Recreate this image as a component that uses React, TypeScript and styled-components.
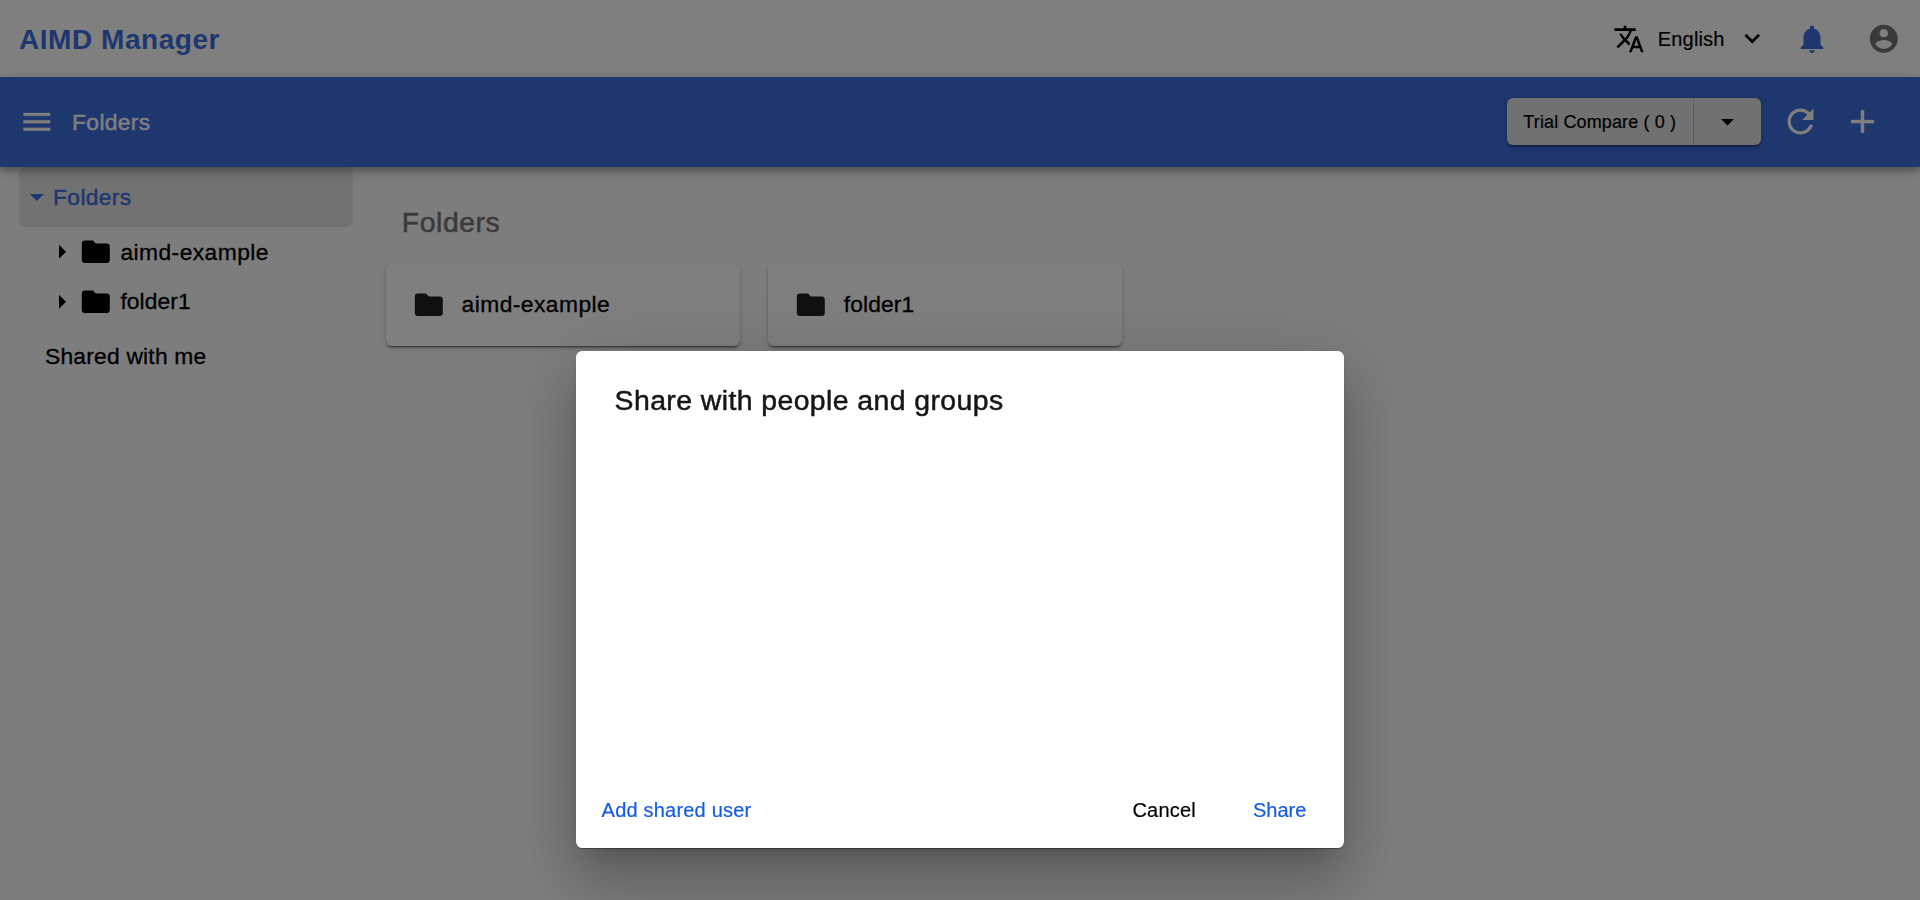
import React from "react";
import styled, { createGlobalStyle } from "styled-components";

const GlobalStyle = createGlobalStyle`
  *, *::before, *::after { box-sizing: border-box; }
  html, body, #root { height: 100%; }
  body {
    margin: 0;
    overflow: hidden;
    background: #fafafa;
    color: #000;
    font-family: "Liberation Sans", Arial, Helvetica, sans-serif;
  }
  button { font: inherit; color: inherit; background: none; border: 0; padding: 0; margin: 0; }
`;

const icons = {
  menu: "M3 18h18v-2H3v2zm0-5h18v-2H3v2zm0-7v2h18V6H3z",
  translate:
    "M12.87 15.07l-2.54-2.51.03-.03c1.74-1.94 2.98-4.17 3.71-6.53H17V4h-7V2H8v2H1v1.99h11.17C11.5 7.92 10.44 9.75 9 11.35 8.07 10.32 7.3 9.19 6.69 8h-2c.73 1.63 1.73 3.17 2.98 4.56l-5.09 5.02L4 19l5-5 3.11 3.11.76-2.04zM18.5 10h-2L12 22h2l1.12-3h4.75L21 22h2l-4.5-12zm-2.62 7l1.62-4.33L19.12 17h-3.24z",
  expand: "M16.59 8.59L12 13.17 7.41 8.59 6 10l6 6 6-6z",
  bell: "M12 22c1.1 0 2-.9 2-2h-4c0 1.1.89 2 2 2zm6-6v-5c0-3.07-1.64-5.64-4.5-6.32V4c0-.83-.67-1.5-1.5-1.5s-1.5.67-1.5 1.5v.68C7.63 5.36 6 7.92 6 11v5l-2 2v1h16v-1l-2-2z",
  account:
    "M12 2C6.48 2 2 6.48 2 12s4.48 10 10 10 10-4.48 10-10S17.52 2 12 2zm0 3c1.66 0 3 1.34 3 3s-1.34 3-3 3-3-1.34-3-3 1.34-3 3-3zm0 14.2c-2.5 0-4.71-1.28-6-3.22.03-1.99 4-3.08 6-3.08 1.99 0 5.97 1.09 6 3.08-1.29 1.94-3.5 3.22-6 3.22z",
  refresh:
    "M17.65 6.35C16.2 4.9 14.21 4 12 4c-4.42 0-7.99 3.58-7.99 8s3.57 8 7.99 8c3.73 0 6.84-2.55 7.73-6h-2.08c-.82 2.33-3.04 4-5.65 4-3.31 0-6-2.69-6-6s2.69-6 6-6c1.66 0 3.14.69 4.22 1.78L13 11h7V4l-2.35 2.35z",
  add: "M19 13h-6v6h-2v-6H5v-2h6V5h2v6h6v2z",
  arrowDown: "M7 10l5 5 5-5z",
  arrowRight: "M10 17l5-5-5-5v10z",
  folder:
    "M10 4H4c-1.1 0-1.99.9-1.99 2L2 18c0 1.1.9 2 2 2h16c1.1 0 2-.9 2-2V8c0-1.1-.9-2-2-2h-8l-2-2z",
};

const Svg = styled.svg<{ $size: number; $color?: string; $weight?: number }>`
  display: block;
  flex: none;
  width: ${(p) => p.$size}px;
  height: ${(p) => p.$size}px;
  fill: ${(p) => p.$color ?? "currentColor"};
  stroke: ${(p) => (p.$weight ? "currentColor" : "none")};
  stroke-width: ${(p) => p.$weight ?? 0};
  stroke-linejoin: round;
`;

interface IconProps {
  name: keyof typeof icons;
  size: number;
  color?: string;
  weight?: number;
}

const Icon = ({ name, size, color, weight }: IconProps) => (
  <Svg viewBox="0 0 24 24" $size={size} $color={color} $weight={weight} aria-hidden="true">
    <path d={icons[name]} />
  </Svg>
);

const Label = styled.span<{ $size: number; $track?: number; $stroke?: number }>`
  font-size: ${(p) => p.$size}px;
  line-height: 32px;
  letter-spacing: ${(p) => p.$track ?? 0}px;
  -webkit-text-stroke: ${(p) => p.$stroke ?? 0}px currentColor;
  white-space: nowrap;
`;

const Page = styled.div`
  height: 100vh;
  display: flex;
  flex-direction: column;
`;

const TopBar = styled.header`
  height: 77px;
  flex: none;
  display: flex;
  align-items: center;
  justify-content: space-between;
  padding: 0 19px;
  background: #fff;
`;

const Brand = styled.h1`
  margin: 0;
  padding-top: 2px;
  color: #3c6ee0;
  font-size: 28px;
  line-height: 32px;
  letter-spacing: 0.55px;
  font-weight: 700;
`;

const TopActions = styled.div`
  display: flex;
  align-items: center;
`;

const Language = styled.button`
  display: flex;
  align-items: center;
  margin-right: 27px;
  gap: 12.8px;
`;

const Avatar = styled.button`
  margin-left: 38.5px;
`;

const NavBar = styled.nav`
  position: relative;
  z-index: 1;
  height: 90px;
  flex: none;
  display: flex;
  align-items: center;
  padding: 0 38px 1px 18.9px;
  background: #3d6fde;
  color: #fff;
  box-shadow: 0 3px 6px -1px rgba(0, 0, 0, 0.2), 0 6px 8px rgba(0, 0, 0, 0.14),
    0 2px 16px rgba(0, 0, 0, 0.12);
`;

const NavTitle = styled.div`
  flex: 1;
  padding-left: 17.6px;
  color: #fff;
`;

const CompareGroup = styled.div`
  display: flex;
  width: 254px;
  height: 47px;
  margin-right: 20.5px;
  border-radius: 6px;
  background: #e2e2e2;
  color: #000;
  box-shadow: 0 3px 2px -2px rgba(0, 0, 0, 0.3), 0 2px 3px rgba(0, 0, 0, 0.2),
    0 1px 8px rgba(0, 0, 0, 0.14);
`;

const CompareButton = styled.button`
  width: 187px;
  padding-left: 16.8px;
  text-align: left;
  border-right: 1px solid #b9b9b9;
`;

const CompareToggle = styled.button`
  flex: 1;
  display: flex;
  align-items: center;
  justify-content: center;
`;

const NavAction = styled.button`
  margin-left: 23px;
  &:first-of-type { margin-left: 0; }
`;

const Body = styled.div`
  flex: 1;
  display: flex;
  background: #fafafa;
`;

const Sidebar = styled.aside`
  width: 386px;
  flex: none;
  padding: 0 33px 0 19px;
`;

const TreeRoot = styled.div`
  display: flex;
  align-items: center;
  height: 60px;
  padding: 0 0 0 0.5px;
  border-radius: 6px;
  background: #e4e4e4;
  color: #3c6ee0;
`;

const TreeList = styled.ul`
  list-style: none;
  margin: 0;
  padding: 0.4px 0 0 26.2px;
`;

const TreeItem = styled.li`
  display: flex;
  align-items: center;
  height: 49.4px;
`;

const TreeLabel = styled.span`
  padding: 0 0 1px 8px;
  display: flex;
`;

const SharedLink = styled.div`
  padding: 14px 0 0 26px;
  display: flex;
`;

const Main = styled.main`
  flex: 1;
  padding-top: 39px;
`;

const SectionTitle = styled.h2`
  margin: 0 0 25.4px;
  padding-left: 15.8px;
  color: #747474;
  font-weight: 400;
  display: flex;
`;

const Cards = styled.div`
  display: flex;
  gap: 28.4px;
`;

const Card = styled.article`
  width: 353.8px;
  height: 82.4px;
  display: flex;
  align-items: center;
  gap: 8px;
  padding: 0 26px;
  border-radius: 6px;
  background: #fff;
  box-shadow: 0 3px 2px -2px rgba(0, 0, 0, 0.4), 0 2px 2px rgba(0, 0, 0, 0.16),
    0 2px 5px rgba(0, 0, 0, 0.16);
`;

const Backdrop = styled.div`
  position: fixed;
  inset: 0;
  z-index: 10;
  display: flex;
  justify-content: center;
  align-items: flex-start;
  padding-top: 351.4px;
  background: rgba(0, 0, 0, 0.5);
`;

const Dialog = styled.section`
  width: 767.6px;
  height: 497px;
  display: flex;
  flex-direction: column;
  border-radius: 6.4px;
  background: #fff;
  box-shadow: 0 17.6px 24px -11.2px rgba(0, 0, 0, 0.2), 0 38.4px 60.8px 4.8px rgba(0, 0, 0, 0.14),
    0 14.4px 73.6px 12.8px rgba(0, 0, 0, 0.12), 0 1px 1px rgba(0, 0, 0, 0.35);
`;

const DialogTitle = styled.h3`
  margin: 0;
  padding: 32.6px 38.4px 0;
  color: #161616;
  font-weight: 400;
  display: flex;
`;

const DialogContent = styled.div`
  flex: 1;
`;

const DialogActions = styled.footer`
  display: flex;
  align-items: center;
  padding: 0 37.5px 22.4px 25.4px;
`;

const ActionButton = styled.button<{ $primary?: boolean }>`
  color: ${(p) => (p.$primary ? "#155be3" : "#000")};
`;

const Spacer = styled.div`
  flex: 1;
`;

const Cancel = styled(ActionButton)`
  margin-right: 57px;
`;

const folders = [
  { name: "aimd-example", track: 0.45 },
  { name: "folder1", track: 0.1 },
];

export default function App() {
  return (
    <>
      <GlobalStyle />
      <Page>
        <TopBar>
          <Brand>AIMD Manager</Brand>
          <TopActions>
            <Language>
              <Icon name="translate" size={32} />
              <Label $size={20} $track={0.15} $stroke={0.2}>English</Label>
              <Icon name="expand" size={30.6} weight={0.2} />
            </Language>
            <Icon name="bell" size={34} color="#3c6ee0" />
            <Avatar aria-label="Account">
              <Icon name="account" size={33.6} color="#757575" />
            </Avatar>
          </TopActions>
        </TopBar>
        <NavBar>
          <Icon name="menu" size={35.6} weight={0.15} />
          <NavTitle>
            <Label $size={22.8} $track={0.35} $stroke={0.4}>Folders</Label>
          </NavTitle>
          <CompareGroup>
            <CompareButton>
              <Label $size={18} $track={0.13} $stroke={0.2}>Trial Compare ( 0 )</Label>
            </CompareButton>
            <CompareToggle aria-label="More">
              <Icon name="arrowDown" size={31} />
            </CompareToggle>
          </CompareGroup>
          <NavAction aria-label="Refresh"><Icon name="refresh" size={39} /></NavAction>
          <NavAction aria-label="Add"><Icon name="add" size={39} weight={0.15} /></NavAction>
        </NavBar>
        <Body>
          <Sidebar>
            <TreeRoot>
              <Icon name="arrowDown" size={33.6} />
              <Label $size={22.8} $track={0.35} $stroke={0.4}>Folders</Label>
            </TreeRoot>
            <TreeList>
              {folders.map((f) => (
                <TreeItem key={f.name}>
                  <Icon name="arrowRight" size={33.6} />
                  <Icon name="folder" size={33.6} />
                  <TreeLabel>
                    <Label $size={22.8} $track={f.track} $stroke={0.3}>{f.name}</Label>
                  </TreeLabel>
                </TreeItem>
              ))}
            </TreeList>
            <SharedLink>
              <Label $size={22.8} $track={0.22} $stroke={0.3}>Shared with me</Label>
            </SharedLink>
          </Sidebar>
          <Main>
            <SectionTitle>
              <Label $size={28.4} $track={0.55} $stroke={0.5}>Folders</Label>
            </SectionTitle>
            <Cards>
              {folders.map((f) => (
                <Card key={f.name}>
                  <Icon name="folder" size={33.6} color="#212121" />
                  <TreeLabel>
                    <Label $size={22.8} $track={f.track} $stroke={0.3}>{f.name}</Label>
                  </TreeLabel>
                </Card>
              ))}
            </Cards>
          </Main>
        </Body>
      </Page>
      <Backdrop>
        <Dialog role="dialog" aria-modal="true">
          <DialogTitle>
            <Label $size={28.4} $track={0.42} $stroke={0.5}>Share with people and groups</Label>
          </DialogTitle>
          <DialogContent />
          <DialogActions>
            <ActionButton $primary>
              <Label $size={20} $track={0.2} $stroke={0.2}>Add shared user</Label>
            </ActionButton>
            <Spacer />
            <Cancel>
              <Label $size={20} $track={0.2} $stroke={0.2}>Cancel</Label>
            </Cancel>
            <ActionButton $primary>
              <Label $size={20} $track={0} $stroke={0.2}>Share</Label>
            </ActionButton>
          </DialogActions>
        </Dialog>
      </Backdrop>
    </>
  );
}
